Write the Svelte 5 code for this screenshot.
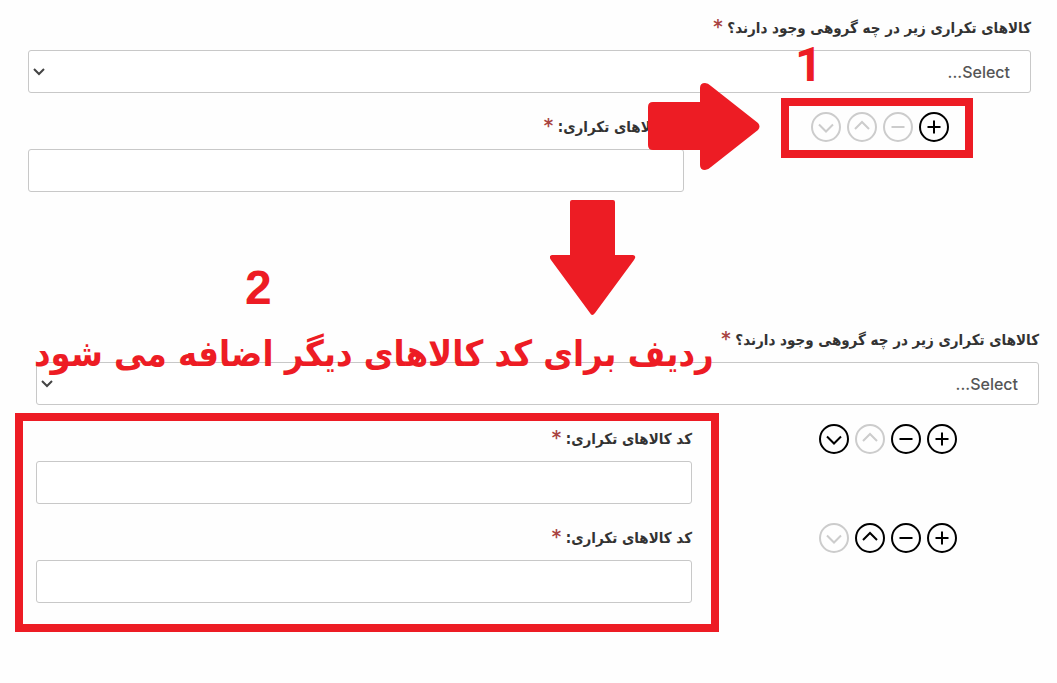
<script lang="ts">
  type Row = { id: string; active: string[] };
  type Step = { id: string; rows: Row[] };

  const question = 'کالاهای تکراری زیر در چه گروهی وجود دارند؟';
  const codeLabel = 'کد کالاهای تکراری:';

  const actions = [
    { name: 'add', title: 'افزودن', path: 'M8.5 15h13M15 8.5v13' },
    { name: 'remove', title: 'حذف', path: 'M8.5 15h13' },
    { name: 'up', title: 'بالا', path: 'M8 17l7-7 7 7' },
    { name: 'down', title: 'پایین', path: 'M8 12.5l7 7 7-7' }
  ];

  const steps: Step[] = [
    { id: 'before', rows: [{ id: 'before-1', active: ['add'] }] },
    {
      id: 'after',
      rows: [
        { id: 'after-1', active: ['add', 'remove', 'down'] },
        { id: 'after-2', active: ['add', 'remove', 'up'] }
      ]
    }
  ];
</script>

<main class="page" dir="rtl">
  {#each steps as step}
    <form class="step {step.id}">
      <label class="label" for="{step.id}-group">
        {question} <span class="required">*</span>
      </label>
      <div class="select-wrap">
        <select id="{step.id}-group">
          <option value="">Select...</option>
        </select>
        <svg class="caret" viewBox="0 0 12 8" aria-hidden="true">
          <path d="M1 1l5 5 5-5" />
        </svg>
      </div>

      {#each step.rows as row}
        <div class="row">
          <div class="actions">
            {#each actions as action}
              <button
                type="button"
                aria-label={action.title}
                disabled={!row.active.includes(action.name)}
              >
                <svg viewBox="0 0 30 30" aria-hidden="true">
                  <circle cx="15" cy="15" r="14" />
                  <path d={action.path} />
                </svg>
              </button>
            {/each}
          </div>
          <div class="field">
            <label class="label" for={row.id}>
              {codeLabel} <span class="required">*</span>
            </label>
            <input id={row.id} type="text" />
          </div>
        </div>
      {/each}
    </form>
  {/each}

  <!-- annotations drawn over the form -->
  <div class="frame frame-actions"></div>
  <div class="frame frame-rows"></div>
  <svg class="arrow arrow-right" viewBox="0 0 112 87" aria-hidden="true">
    <path d="M5 19H52V5Q52 0 57 0Q60 0 63 3L110 40Q113 43.5 110 47L63 84Q60 87 57 87Q52 87 52 82V67H5Q0 67 0 62V24Q0 19 5 19Z" />
  </svg>
  <svg class="arrow arrow-down" viewBox="0 0 86 116" aria-hidden="true">
    <path d="M22 0H63Q65 0 65 2V55H83Q87 56 84 60L45 113Q42 117 40 113L1 60Q-2 56 2 55H20V2Q20 0 22 0Z" />
  </svg>
  <span class="number one">1</span>
  <span class="number two">2</span>
  <p class="note">ردیف برای کد کالاهای دیگر اضافه می شود</p>
</main>

<style>
  :global(body) {
    margin: 0;
    background: #fefefe;
  }

  .page {
    position: relative;
    min-height: 100vh;
    box-sizing: border-box;
    overflow: hidden;
    font-family: 'DejaVu Sans Condensed', 'DejaVu Sans', sans-serif;
    color: #333;
  }

  .step {
    padding-top: 14px;
  }

  .before {
    margin: 0 26px 0 28px;
  }

  .after {
    margin: 120px 18px 0 36px;
  }

  .label {
    display: block;
    height: 28px;
    margin-bottom: 8px;
    font-size: 15px;
    font-weight: 700;
    line-height: 28px;
    white-space: nowrap;
  }

  .required {
    color: #a94442;
    font-size: 20px;
    line-height: 20px;
  }

  .select-wrap {
    position: relative;
    margin-bottom: 19px;
  }

  select,
  input {
    display: block;
    box-sizing: border-box;
    width: 100%;
    height: 43px;
    padding: 0 20px;
    border: 1px solid #c8c8c8;
    border-radius: 3px;
    background: #fff;
    color: #555;
    font: 500 16px Inter, sans-serif;
    appearance: none;
  }

  .caret {
    position: absolute;
    left: 5px;
    top: 18px;
    width: 12px;
    height: 8px;
    fill: none;
    stroke: #444;
    stroke-width: 2;
  }

  .row {
    display: flex;
    margin-bottom: 19px;
  }

  .actions {
    display: flex;
    flex: 1;
    gap: 6px;
    padding-right: 82px;
  }

  .field {
    width: 656px;
    padding-top: 1px;
  }

  button {
    width: 30px;
    height: 30px;
    padding: 0;
    border: 0;
    background: none;
    color: #000;
    cursor: pointer;
  }

  button:disabled {
    color: #ccc;
    cursor: default;
  }

  button svg {
    display: block;
    fill: none;
    stroke: currentColor;
    stroke-width: 2;
  }

  .frame {
    position: absolute;
    box-sizing: border-box;
    border: 8px solid #ed1c24;
    pointer-events: none;
  }

  .frame-actions {
    left: 781px;
    top: 98px;
    width: 192px;
    height: 60px;
  }

  .frame-rows {
    left: 15px;
    top: 413px;
    width: 704px;
    height: 219px;
  }

  .arrow {
    position: absolute;
    fill: #ed1c24;
  }

  .arrow-right {
    left: 648px;
    top: 83px;
    width: 112px;
    height: 87px;
  }

  .arrow-down {
    left: 550px;
    top: 200px;
    width: 86px;
    height: 116px;
  }

  .number {
    position: absolute;
    color: #ed1c24;
    font-size: 48px;
    font-weight: 700;
    line-height: 48px;
  }

  .one {
    left: 795px;
    top: 41px;
    font-family: Roboto, sans-serif;
  }

  .two {
    left: 245px;
    top: 264px;
    font-family: 'Liberation Sans', sans-serif;
  }

  .note {
    position: absolute;
    left: 34px;
    top: 324px;
    margin: 0;
    color: #ed1c24;
    font-size: 36px;
    font-weight: 700;
    line-height: 60px;
    white-space: nowrap;
  }
</style>
